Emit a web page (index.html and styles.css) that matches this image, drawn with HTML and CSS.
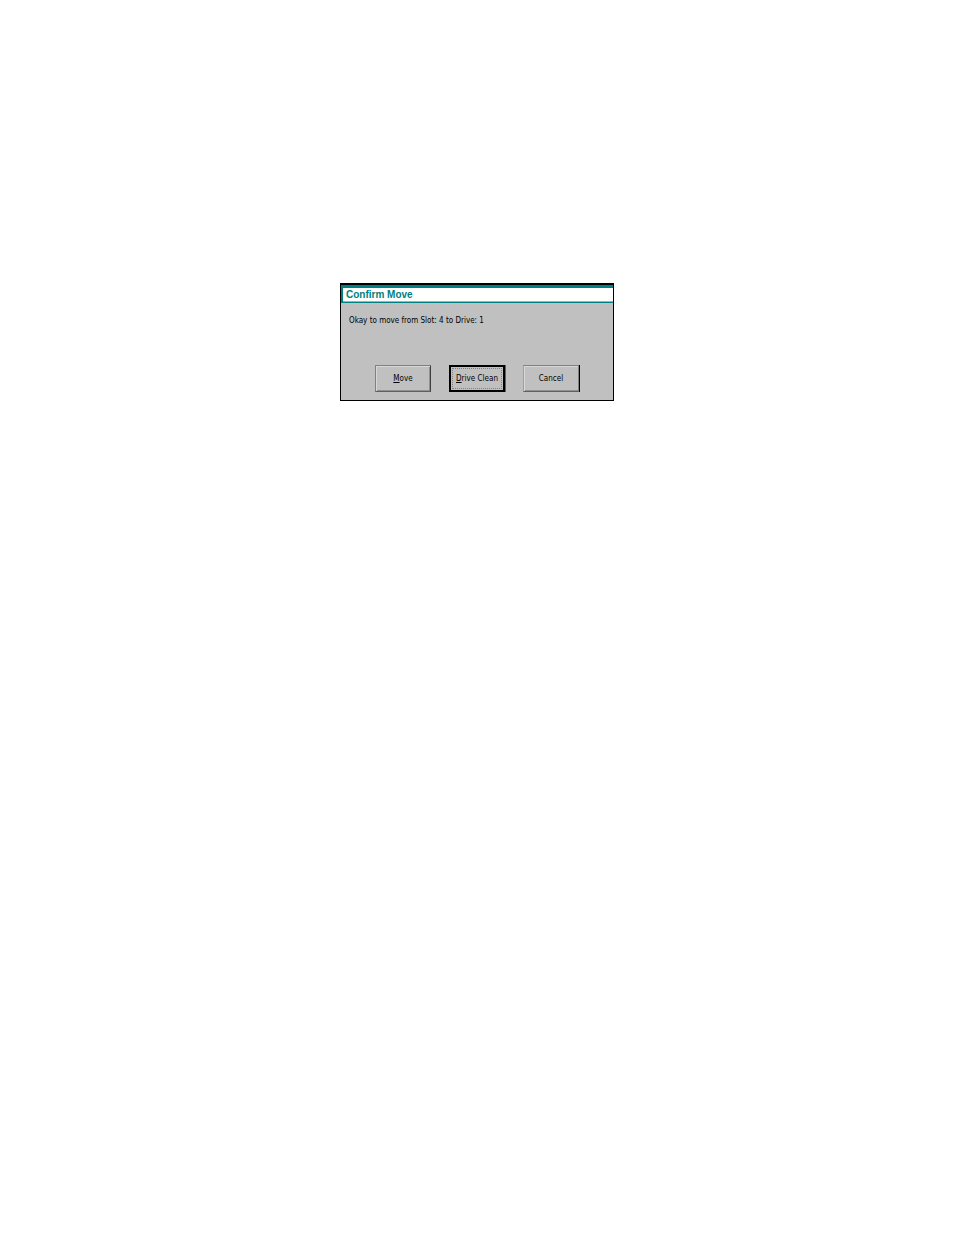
FILE: index.html
```html
<!DOCTYPE html>
<html lang="en">
  <head>
    <meta charset="UTF-8" />
    <meta name="viewport" content="width=device-width, initial-scale=1.0" />
    <title>Confirm Move</title>
    <link rel="stylesheet" href="styles.css">
  </head>
  <body>
    <div class="dialog" role="dialog" aria-labelledby="title">
      <div class="title" id="title">Confirm Move</div>
      <form class="form">
        <p class="message">Okay to move from Slot: 4 to Drive: 1</p>
        <div class="buttons">
          <button type="button" class="btn" accesskey="m"><u>M</u>ove</button>
          <button type="button" class="btn btn-default" accesskey="d"><u>D</u>rive Clean</button>
          <button type="button" class="btn btn-cancel">Cancel</button>
        </div>
      </form>
    </div>
  </body>
</html>
```

FILE: styles.css
```css
body {
  margin: 0;
  padding: 283px 16px 16px;
  background-color: #fff;
  font-family: "DejaVu Sans Condensed", "DejaVu Sans", sans-serif;
  font-size: 8px;
  color: #000;
}

.dialog {
  box-sizing: border-box;
  max-width: 274px;
  margin: 0 auto;
  border: 1px solid #000;
  border-top-width: 2px;
  background-color: #c0c0c0;
}

.title {
  padding: 0 3px;
  border: 2px solid #008080;
  border-top-width: 3px;
  border-right: 0;
  border-bottom-width: 1px;
  background-color: #fff;
  box-shadow: inset 0 -1px #80c0c0;
  color: #008080;
  font-family: "Liberation Sans", sans-serif;
  font-size: 10px;
  font-weight: bold;
  line-height: 14px;
}

.form {
  padding: 12px 8px 8px;
}

.message {
  margin: 0 0 38px;
  line-height: 12px;
}

/* button row */
.buttons {
  display: flex;
  justify-content: center;
  gap: 18px;
}

.btn {
  box-sizing: border-box;
  width: 56px;
  height: 27px;
  padding: 0;
  border: 1px solid;
  border-color: #808080 #404040 #606060 #808080;
  border-radius: 0;
  background-color: #c0c0c0;
  box-shadow: inset 1px 1px #d8d8d8, inset -1px -1px #909090;
  color: #000;
  font: inherit;
  white-space: nowrap;
}

.btn-default {
  border: 2px solid #000;
  box-shadow: 1px 0 #606060;
  outline: 1px dotted #808080;
  outline-offset: -4px;
}

.btn-cancel {
  border-color: #808080 #808080 #606060 #a0a0a0;
  box-shadow: 1px 0 #000, inset 1px 1px #d8d8d8, inset 0 -1px #909090;
}
```
